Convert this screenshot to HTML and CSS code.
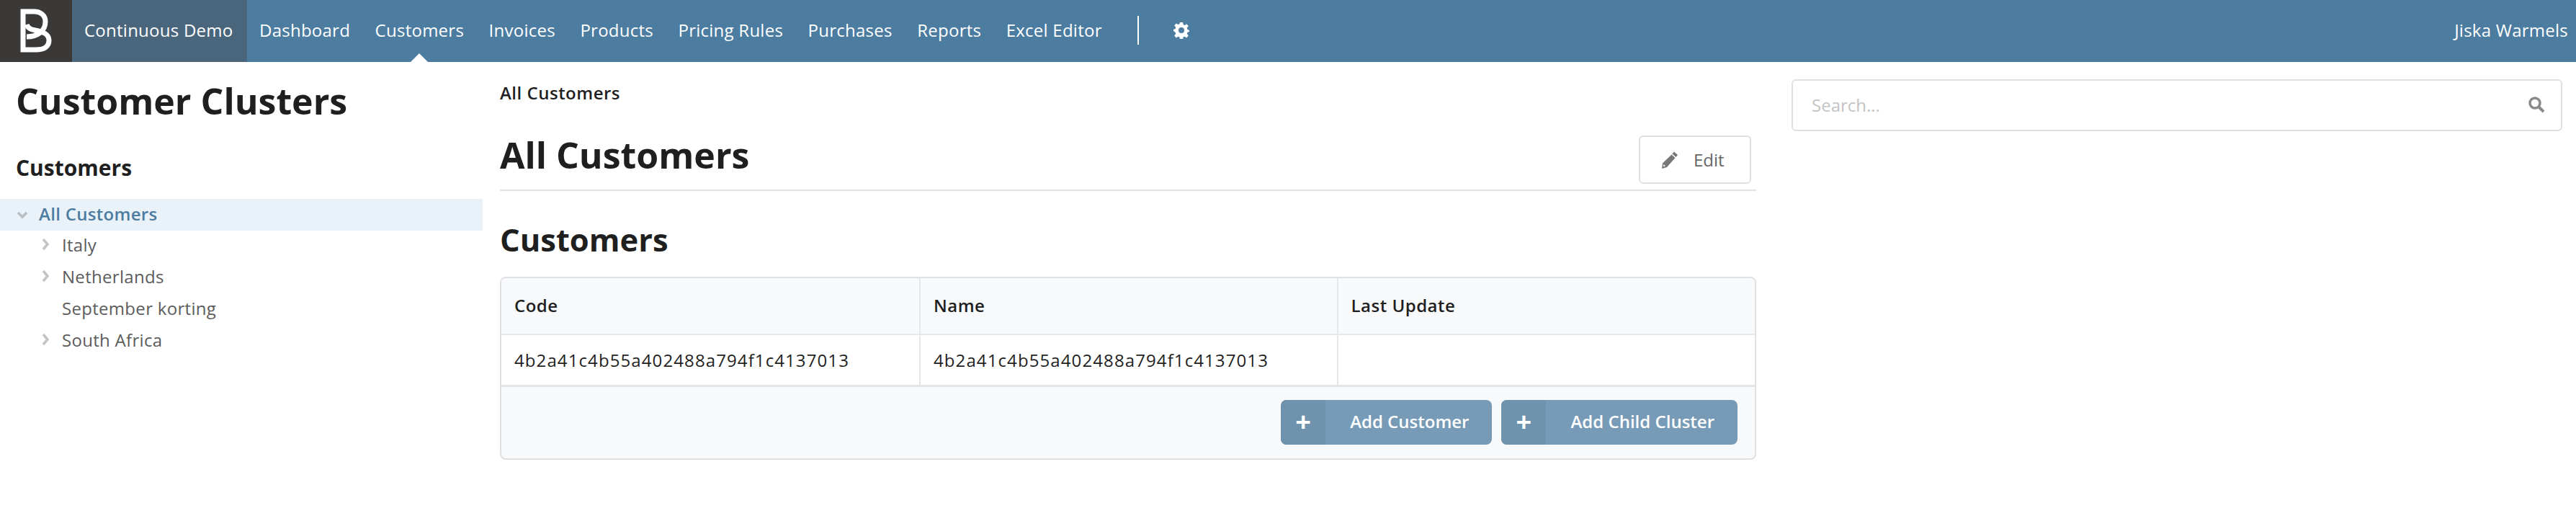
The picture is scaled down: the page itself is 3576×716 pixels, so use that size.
FILE: index.html
```html
<!DOCTYPE html>
<html lang="en">
<head>
<meta charset="utf-8">
<title>Customer Clusters</title>
<link rel="stylesheet" href="styles.css">
</head>
<body>
<header class="nav">
  <a class="logo"><svg width="100" height="86" viewBox="0 0 100 86" fill="none" stroke="#fff" stroke-width="7"><path d="M37 51C52 51 63 43 63 30C63 21 56 16 47 16H32V69H50C61 69 68 65 68 56C68 47 59 44 49 42C44 41 39 40 37 34"/></svg></a>
  <a class="org">Continuous Demo</a>
  <nav class="menu">
    <a>Dashboard</a>
    <a class="active">Customers</a>
    <a>Invoices</a>
    <a>Products</a>
    <a>Pricing Rules</a>
    <a>Purchases</a>
    <a>Reports</a>
    <a>Excel Editor</a>
  </nav>
  <span class="divider"></span>
  <svg class="gear" width="24" height="24" viewBox="0 0 24 24"><path fill="#fff" fill-rule="evenodd" d="M10 1h4l.6 3 2.100.9 2.600-1.700 2.500 3.100-2 2.200.5 2.200 2.700 1.200v1.800l-2.700 1.200-.5 2.200 2 2.200-2.500 3.100-2.600-1.700-2.100.9-.6 3h-4l-.6-3-2.100-.9-2.600 1.700-2.500-3.100 2-2.200-.5-2.200L1 12.900v-1.800l2.700-1.200.5-2.200-2-2.200 2.500-3.100 2.600 1.700 2.100-.9zM12 8a4 4 0 1 0 0 8 4 4 0 0 0 0-8z"/></svg>
  <span class="user">Jiska Warmels</span>
</header>
<div class="page">
  <aside class="side">
    <h1 class="side-title">Customer Clusters</h1>
    <h3 class="side-sub">Customers</h3>
    <ul class="tree">
      <li class="node root"><svg class="chev" width="16" height="12" viewBox="0 0 16 12"><path d="M2 3l6 6 6-6" fill="none" stroke="#b9bfc4" stroke-width="3.500"/></svg>All Customers</li>
      <li class="node child"><svg class="chev" width="12" height="18" viewBox="0 0 12 18"><path d="M3 2l6 7-6 7" fill="none" stroke="#c4c4c4" stroke-width="3.500"/></svg>Italy</li>
      <li class="node child"><svg class="chev" width="12" height="18" viewBox="0 0 12 18"><path d="M3 2l6 7-6 7" fill="none" stroke="#c4c4c4" stroke-width="3.500"/></svg>Netherlands</li>
      <li class="node child leaf">September korting</li>
      <li class="node child"><svg class="chev" width="12" height="18" viewBox="0 0 12 18"><path d="M3 2l6 7-6 7" fill="none" stroke="#c4c4c4" stroke-width="3.500"/></svg>South Africa</li>
    </ul>
  </aside>
  <main class="main">
    <div class="crumb">All Customers</div>
    <div class="head">
      <h2 class="title">All Customers</h2>
      <button class="edit"><svg width="26" height="26" viewBox="0 0 26 26"><path fill="#777" d="M19 1.500l5 4.500-2.500 3-5-4.500zM15.500 5.500l5 4.500L9 23l-7 2 1-7.500z"/><path fill="#fff" d="M4.500 19l2.500 2.200-3.200 1z"/></svg>Edit</button>
    </div>
    <h3 class="section">Customers</h3>
    <div class="card">
      <table class="grid">
        <thead><tr><th>Code</th><th>Name</th><th>Last Update</th></tr></thead>
        <tbody><tr><td class="hash">4b2a41c4b55a402488a794f1c4137013</td><td class="hash">4b2a41c4b55a402488a794f1c4137013</td><td></td></tr></tbody>
      </table>
      <div class="foot">
        <button class="add"><span class="plus">+</span><span class="lbl">Add Customer</span></button>
        <button class="add"><span class="plus">+</span><span class="lbl">Add Child Cluster</span></button>
      </div>
    </div>
  </main>
  <div class="right">
    <div class="search">
      <span class="ph">Search...</span>
      <svg width="24" height="24" viewBox="0 0 24 24" fill="none" stroke="#8a8a8a"><circle cx="10" cy="10" r="7" stroke-width="3.500"/><path d="M15 15l7 7" stroke-width="4"/></svg>
    </div>
  </div>
</div>
</body>
</html>
```
FILE: styles.css
```css
* { box-sizing: border-box; }
html, body { margin: 0; padding: 0; background: #fff; }
body { font-family: "Open Sans", "Noto Sans", sans-serif; color: #1f1f1f; width: 3576px; height: 716px; overflow: hidden; }
h1, h2, h3, ul { margin: 0; padding: 0; }

.nav { height: 86px; background: #4c7ca0; display: flex; align-items: stretch; color: #fff; font-size: 24px; line-height: 83px; letter-spacing: .25px; }
.logo { width: 100px; background: #3b3838; display: block; }
.logo svg { display: block; }
.org { width: 243px; background: #4a667d; padding-left: 17px; white-space: nowrap; }
.menu { display: flex; gap: 34.500px; margin-left: 17px; }
.menu a { position: relative; white-space: nowrap; }
.menu a.active::after { content: ""; position: absolute; left: 50%; bottom: 0; margin-left: -12px; border: 12px solid transparent; border-top: 0; border-bottom-color: #fff; }
.divider { width: 2px; height: 40px; background: #fff; margin: 22px 0 0 49px; }
.gear { margin: 30px 0 0 47px; }
.user { margin-left: auto; padding-right: 11px; white-space: nowrap; }

.page { display: grid; grid-template-columns: 670px 1744px 1070px; column-gap: 24px; align-items: start; }

.side-title { font-size: 50px; line-height: 70px; font-weight: 700; padding: 19px 0 0 22px; }
.side-sub { font-size: 30px; line-height: 40px; font-weight: 700; padding: 38px 0 0 22px; }
.tree { list-style: none; margin-top: 23px; }
.node { height: 44px; line-height: 41px; font-size: 24px; position: relative; color: #5c5c5c; white-space: nowrap; letter-spacing: .3px; }
.node.root { background: #eaf2f9; color: #4c7ca0; font-weight: 600; padding-left: 54px; }
.node.child { padding-left: 86px; line-height: 39px; }
.root .chev { position: absolute; left: 23px; top: 16px; }
.child .chev { position: absolute; left: 57px; top: 10px; }

.crumb { font-size: 24px; line-height: 32px; font-weight: 600; padding-top: 27px; letter-spacing: .5px; }
.head { display: flex; justify-content: space-between; align-items: flex-start; height: 120px; border-bottom: 2px solid #e2e2e2; }
.title { font-size: 50px; line-height: 70px; margin-top: 35px; font-weight: 700; }
.edit { margin: 43px 7px 0 0; width: 156px; height: 67px; border: 2px solid #e0e0e0; border-radius: 6px; background: #fff; color: #666; font: 24px "Open Sans", sans-serif; display: flex; align-items: center; padding: 0 0 0 28px; gap: 20px; }
.section { font-size: 43.500px; line-height: 60px; font-weight: 700; margin-top: 38px; }
.card { margin-top: 21px; border: 2px solid #e0e1e3; border-radius: 8px; background: #f8f9fb; overflow: hidden; height: 254px; }
.grid { width: 100%; border-collapse: collapse; table-layout: fixed; font-size: 24px; }
.grid th { height: 78px; background: #f8f9fb; text-align: left; font-weight: 600; padding: 0 18px 3px; border-right: 2px solid #e6e7e9; border-bottom: 2px solid #e6e7e9; letter-spacing: .5px; }
.grid th:first-child { width: 581px; }
.grid td { height: 71px; background: #fff; padding: 0 18px; border-right: 2px solid #e6e7e9; border-bottom: 3px solid #e3e4e6; }
.grid .hash { letter-spacing: 1.100px; }
.grid th:last-child, .grid td:last-child { border-right: 0; }
.foot { display: flex; justify-content: flex-end; gap: 13px; padding: 18px 24px 0 0; }
.add { height: 62px; padding: 0; border: 0; border-radius: 8px; background: #779bb6; color: #fff; font: 600 24px "Open Sans", sans-serif; display: flex; overflow: hidden; }
.plus { width: 62px; height: 62px; background: #6f93ad; font-size: 38px; line-height: 58px; font-weight: 700; text-align: center; }
.lbl { padding: 0 32px 0 34px; line-height: 60px; white-space: nowrap; }

.right { margin-left: 25px; padding-top: 24px; }
.search { width: 1070px; height: 72px; border: 2px solid #e0e0e0; border-radius: 6px; display: flex; align-items: center; justify-content: space-between; padding: 0 22px 2px 26px; background: #fff; }
.ph { font-size: 24px; color: #c4c4c4; }
```
